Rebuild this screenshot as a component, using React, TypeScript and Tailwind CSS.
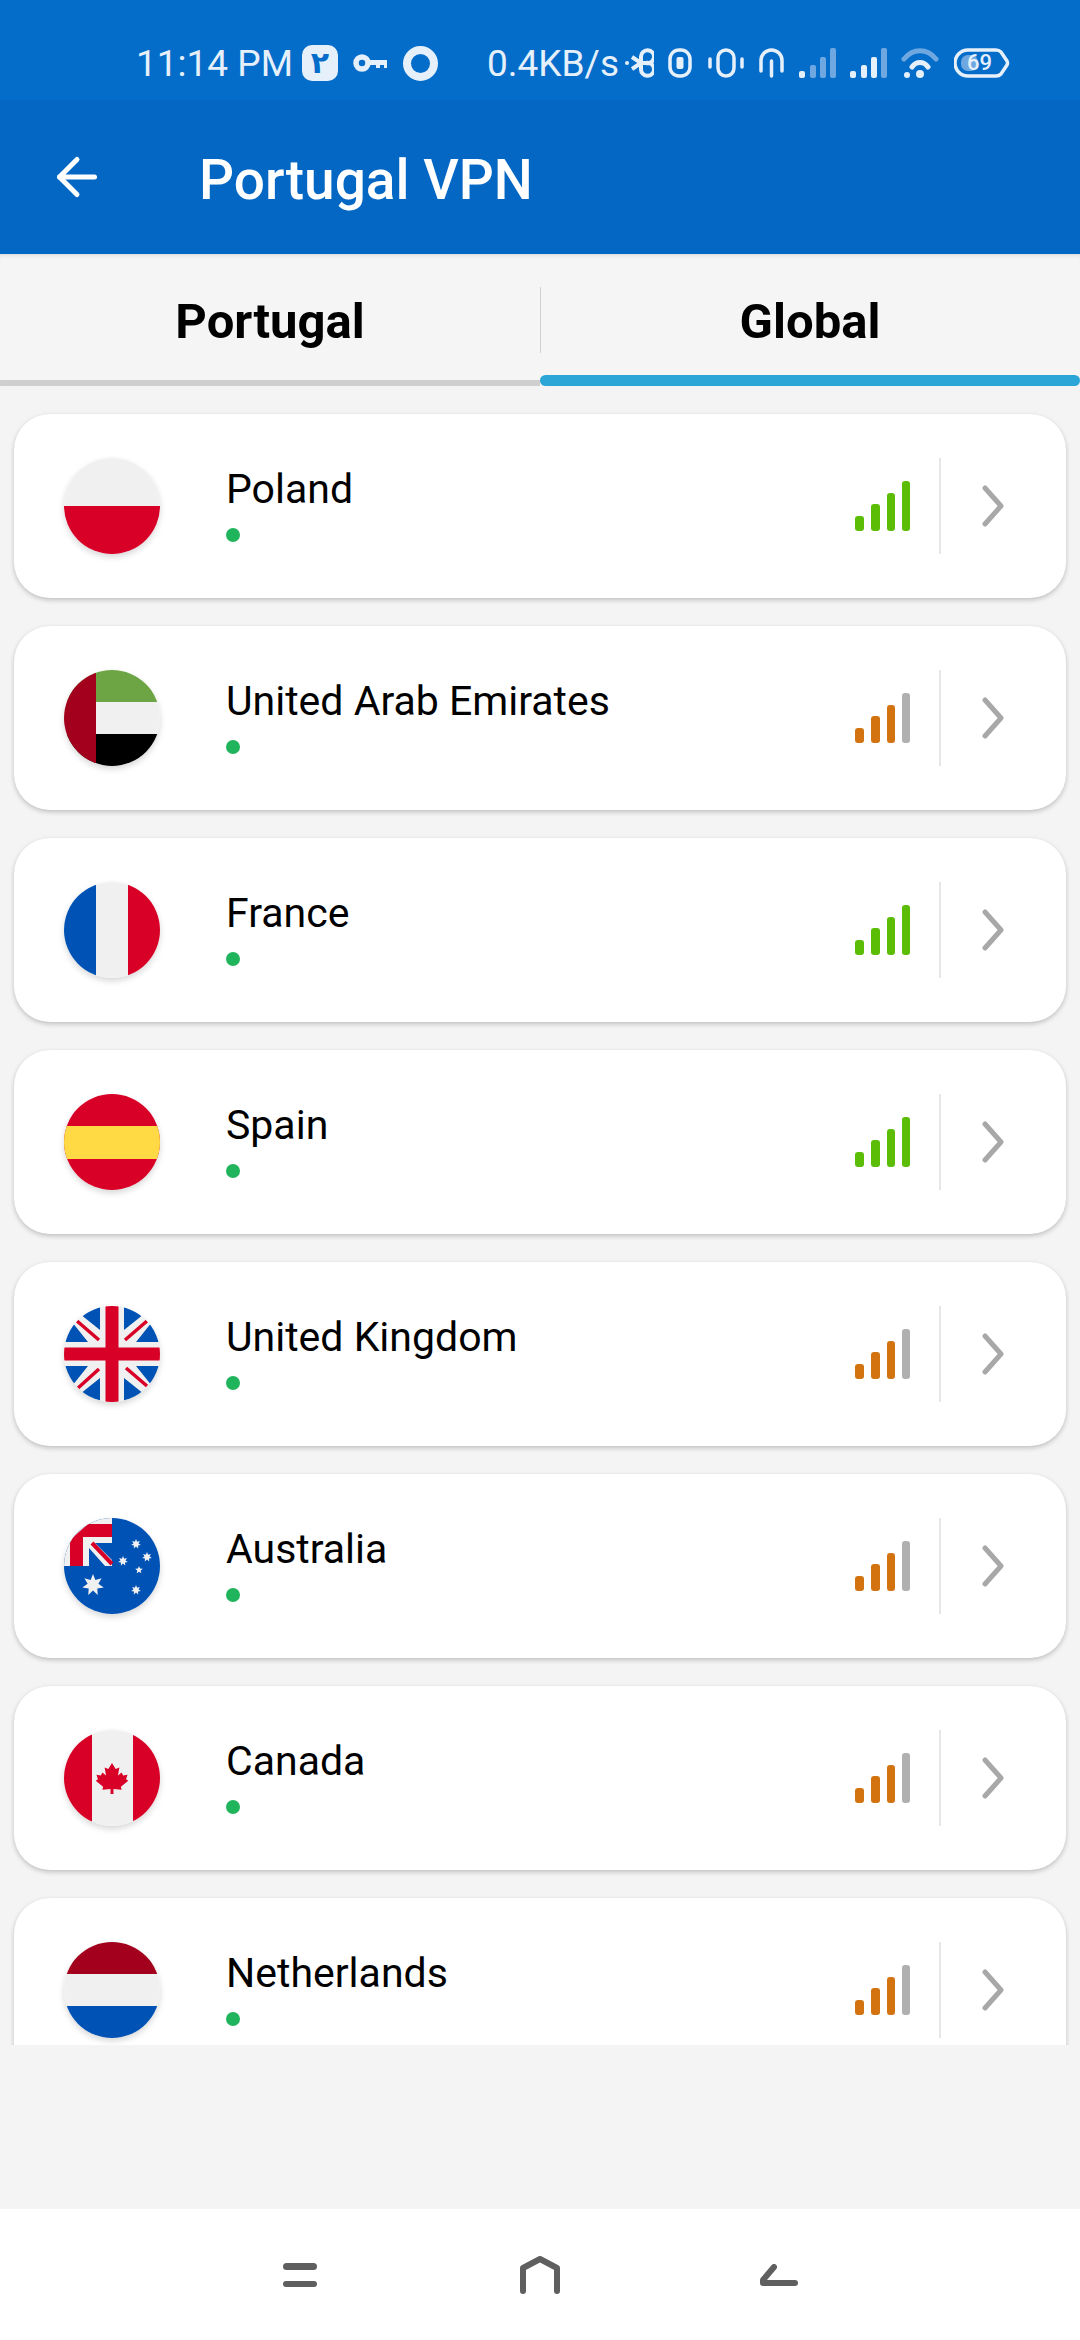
import { ArrowLeft } from 'lucide-react';

type Country = {
  name: string;
  flag: string;
  strong?: boolean;
};

const countries: Country[] = [
  { name: 'Poland', flag: 'pl', strong: true },
  { name: 'United Arab Emirates', flag: 'ae' },
  { name: 'France', flag: 'fr', strong: true },
  { name: 'Spain', flag: 'es', strong: true },
  { name: 'United Kingdom', flag: 'gb' },
  { name: 'Australia', flag: 'au' },
  { name: 'Canada', flag: 'ca' },
  { name: 'Netherlands', flag: 'nl' },
];

// 澳大利亚国旗上的星星
function starPoints(cx: number, cy: number, outer: number, inner: number, tips: number) {
  const pts: string[] = [];
  for (let i = 0; i < tips * 2; i++) {
    const r = i % 2 === 0 ? outer : inner;
    const a = (Math.PI * i) / tips - Math.PI / 2;
    pts.push(`${(cx + r * Math.cos(a)).toFixed(2)},${(cy + r * Math.sin(a)).toFixed(2)}`);
  }
  return pts.join(' ');
}

// 国旗都画在 96x96 的方框里，外面用圆形裁剪
function FlagArt({ flag }: { flag: string }) {
  switch (flag) {
    case 'pl':
      return (
        <>
          <rect width="96" height="48" fill="#f0f0f0" />
          <rect y="48" width="96" height="48" fill="#d80027" />
        </>
      );
    case 'ae':
      return (
        <>
          <rect width="96" height="32" fill="#6da544" />
          <rect y="32" width="96" height="32" fill="#f0f0f0" />
          <rect y="64" width="96" height="32" fill="#000000" />
          <rect width="32" height="96" fill="#a2001d" />
        </>
      );
    case 'fr':
      return (
        <>
          <rect width="32" height="96" fill="#0052b4" />
          <rect x="32" width="32" height="96" fill="#f0f0f0" />
          <rect x="64" width="32" height="96" fill="#d80027" />
        </>
      );
    case 'es':
      return (
        <>
          <rect width="96" height="96" fill="#d80027" />
          <rect y="32" width="96" height="33" fill="#ffda44" />
        </>
      );
    case 'gb':
      return (
        <>
          <rect width="96" height="96" fill="#f0f0f0" />
          <path
            d="M36 0V24L16 8ZM0 36H24L8 16ZM60 0V24L80 8ZM96 36H72L88 16ZM36 96V72L16 88ZM0 60H24L8 80ZM60 96V72L80 88ZM96 60H72L88 80Z"
            fill="#0052b4"
          />
          <path d="M13 15 35 34M83 15 61 34M14 82 35 63M83 80 62 62" stroke="#d80027" strokeWidth="3.5" />
          <rect x="41.5" width="13" height="96" fill="#d80027" />
          <rect y="41.5" width="96" height="13" fill="#d80027" />
        </>
      );
    case 'au':
      return (
        <>
          <rect width="96" height="96" fill="#0052b4" />
          <rect width="48" height="48" fill="#f0f0f0" />
          <path d="M6 48V22L24 6H48V19H19V48Z" fill="#d80027" />
          <path d="M25 30V48H41ZM31 25H48V42Z" fill="#0052b4" />
          <path d="M28 25 48 46" stroke="#d80027" strokeWidth="4" />
          <g fill="#f0f0f0">
            <polygon points={starPoints(29, 67, 11, 5.5, 7)} />
            <polygon points={starPoints(72, 26, 5, 2.6, 7)} />
            <polygon points={starPoints(59, 43, 5, 2.6, 7)} />
            <polygon points={starPoints(83, 39, 5, 2.6, 7)} />
            <polygon points={starPoints(75, 52, 4, 1.8, 5)} />
            <polygon points={starPoints(72, 72, 5, 2.6, 7)} />
          </g>
        </>
      );
    case 'ca':
      return (
        <>
          <rect width="96" height="96" fill="#f0f0f0" />
          <rect width="28" height="96" fill="#d80027" />
          <rect x="69" width="27" height="96" fill="#d80027" />
          <path
            transform="translate(48 33) scale(.74) translate(-48 -32)"
            d="M48 32 53 40 58 38 56 49 61 45 63 49 69 48 67 54 70 56 60 64 61 68 50 67V74H46V67L35 68 36 64 26 56 29 54 27 48 33 49 35 45 40 49 38 38 43 40Z"
            fill="#d80027"
          />
        </>
      );
    default:
      return (
        <>
          <rect width="96" height="32" fill="#a2001d" />
          <rect y="32" width="96" height="32" fill="#f0f0f0" />
          <rect y="64" width="96" height="32" fill="#0052b4" />
        </>
      );
  }
}

function Flag({ flag }: { flag: string }) {
  return (
    <div className="h-[96px] w-[96px] shrink-0 overflow-hidden rounded-full shadow-[0_3px_6px_rgba(0,0,0,0.16)]">
      <svg viewBox="0 0 96 96" className="block h-full w-full">
        <FlagArt flag={flag} />
      </svg>
    </div>
  );
}

function SignalBars({ strong }: { strong?: boolean }) {
  const on = strong ? 'bg-[#5cbd06]' : 'bg-[#d2730f]';
  return (
    <div className="flex items-end gap-[7px]">
      <div className={`h-[15px] w-[9px] rounded-[3px] ${on}`} />
      <div className={`h-[27px] w-[9px] rounded-[3px] ${on}`} />
      <div className={`h-[38px] w-[8px] rounded-[3px] ${on}`} />
      <div className={`h-[50px] w-[8px] rounded-[3px] ${strong ? on : 'bg-[#b0b0b0]'}`} />
    </div>
  );
}

function CountryCard({ country }: { country: Country }) {
  return (
    <div className="flex h-[184px] shrink-0 items-center rounded-[36px] bg-white pl-[50px] pr-[62px] shadow-[0_2px_5px_rgba(0,0,0,0.22)]">
      <Flag flag={country.flag} />
      <div className="ml-[66px] flex flex-1 flex-col pb-[4px]">
        <div className="text-[41px] leading-[47px] text-black">{country.name}</div>
        <div className="mt-[15px] h-[14px] w-[14px] rounded-full bg-[#20b45c]" />
      </div>
      <SignalBars strong={country.strong} />
      <div className="ml-[29px] h-[96px] w-[2px] bg-[#e6e6e6]" />
      <svg viewBox="0 0 22 42" className="ml-[41px] h-[42px] w-[22px]" fill="none" stroke="#a8a8a8" strokeWidth="5" strokeLinecap="round" strokeLinejoin="round">
        <path d="M3 3 19 21 3 39" />
      </svg>
    </div>
  );
}

function StatusIcons() {
  return (
    <>
      <svg width="29" height="30" viewBox="0 0 29 30" fill="none" stroke="#e6f0fa" strokeWidth="4" className="ml-[9px]">
        <path d="M7 9 16 15 21 15A6.5 6.5 0 1 0 16 9V21A6.5 6.5 0 1 0 21 15M16 15 7 21" />
        <circle cx="2" cy="15" r="2" fill="#e6f0fa" stroke="none" />
      </svg>
      <svg width="24" height="30" viewBox="0 0 24 30" fill="none" stroke="#e6f0fa" strokeWidth="3.5" className="ml-[14px]">
        <rect x="2" y="2" width="20" height="26" rx="9" />
        <rect x="8.5" y="9" width="7" height="12" rx="2" fill="#e6f0fa" stroke="none" />
      </svg>
      <svg width="36" height="30" viewBox="0 0 36 30" fill="none" stroke="#e6f0fa" strokeWidth="3.5" strokeLinecap="round" className="ml-[16px]">
        <rect x="10" y="2" width="16" height="26" rx="8" />
        <path d="M2 11V19M34 11V19" />
      </svg>
      <svg width="25" height="30" viewBox="0 0 25 30" fill="none" stroke="#e6f0fa" strokeWidth="3.5" strokeLinecap="round" className="ml-[15px]">
        <path d="M2 23V12.5a10.5 10.5 0 0 1 21 0V23M12.5 13V28" />
      </svg>
      <svg width="37" height="30" viewBox="0 0 37 30" className="ml-[15px]">
        <rect x="0" y="23" width="6" height="7" rx="2" fill="#e6f0fa" />
        <rect x="11" y="17" width="6" height="13" rx="2" fill="#6fa8e0" />
        <rect x="21" y="9" width="6" height="21" rx="2" fill="#6fa8e0" />
        <rect x="31" y="0" width="6" height="30" rx="2" fill="#6fa8e0" />
      </svg>
      <svg width="37" height="30" viewBox="0 0 37 30" className="ml-[14px]">
        <rect x="0" y="23" width="6" height="7" rx="2" fill="#e6f0fa" />
        <rect x="11" y="17" width="6" height="13" rx="2" fill="#e6f0fa" />
        <rect x="21" y="9" width="6" height="21" rx="2" fill="#e6f0fa" />
        <rect x="31" y="0" width="6" height="30" rx="2" fill="#6fa8e0" />
      </svg>
      <svg width="38" height="30" viewBox="0 0 38 30" fill="none" className="ml-[14px]">
        <path d="M3 11C12 0 26 0 35 11" stroke="#6fa8e0" strokeWidth="5" strokeLinecap="round" />
        <path d="M11 19C15 13 23 13 27 19" stroke="#e6f0fa" strokeWidth="5" strokeLinecap="round" />
        <circle cx="6" cy="27" r="3" fill="#e6f0fa" />
        <circle cx="19" cy="26" r="4" fill="#e6f0fa" />
      </svg>
      <div className="relative ml-[15px] h-[30px] w-[56px]">
        <svg width="56" height="30" viewBox="0 0 56 30" fill="none" className="absolute inset-0">
          <rect x="7" y="7" width="17" height="16" rx="7" fill="#6fa8e0" />
          <path d="M14 2H42Q45 2 47 4L53 13Q54 15 53 17L47 26Q45 28 42 28H14A13 13 0 0 1 14 2Z" stroke="#e6f0fa" strokeWidth="3.5" />
        </svg>
        <span className="absolute left-[13px] top-0 text-[22px] font-medium leading-[30px] text-[#e6f0fa]">69</span>
      </div>
    </>
  );
}

function StatusBar() {
  return (
    <div className="flex h-[100px] items-center whitespace-nowrap bg-[#046dca] pl-[136px] pt-[26px] font-['Roboto',sans-serif] text-[37px] leading-none text-[#e6f0fa]">
      <span className="w-[157px]">11:14 PM</span>
      <div className="ml-[9px] flex h-[36px] w-[36px] items-center justify-center rounded-[10px] bg-[#e6f0fa] font-['DejaVu_Sans',sans-serif] text-[30px] font-bold text-[#046dca]">
        ٢
      </div>
      <svg width="34" height="18" viewBox="0 0 34 18" fill="none" className="ml-[15px]">
        <circle cx="9" cy="9" r="6" stroke="#e6f0fa" strokeWidth="5.5" />
        <path d="M14 6H34V14H31V11H27V14H23V11H14Z" fill="#e6f0fa" />
      </svg>
      <div className="ml-[16px] h-[35px] w-[35px] rounded-full border-[8px] border-[#e6f0fa]" />
      <span className="ml-[49px] w-[129px]">0.4KB/s</span>
      <StatusIcons />
    </div>
  );
}

function NavBar() {
  return (
    <div className="flex h-[131px] shrink-0 items-center justify-center gap-[200px] bg-white">
      <svg width="34" height="24" viewBox="0 0 34 24" fill="#5f5f5f" className="mr-[3px]">
        <rect width="34" height="7" rx="3.5" />
        <rect y="18" width="34" height="6" rx="3" />
      </svg>
      <svg width="40" height="38" viewBox="0 0 40 38" fill="none" stroke="#5f5f5f" strokeWidth="6" strokeLinecap="round" strokeLinejoin="round">
        <path d="M3 35V12L20 3 37 12V35" />
      </svg>
      <svg width="38" height="22" viewBox="0 0 38 22" fill="none" stroke="#5f5f5f" strokeWidth="6" strokeLinecap="round" strokeLinejoin="round">
        <path d="M14 3 3 16V19H35" />
      </svg>
    </div>
  );
}

export default function App() {
  return (
    <div className="flex h-[2340px] w-[1080px] flex-col overflow-hidden bg-[#f4f4f4] font-['Roboto',sans-serif]">
      <StatusBar />

      <div className="flex h-[154px] shrink-0 items-center bg-[#0467c4]">
        <ArrowLeft className="ml-[47px] h-[60px] w-[60px] text-white" strokeWidth={2} />
        <h1 className="ml-[92px] mt-[6px] text-[55px] font-medium leading-none text-white">Portugal VPN</h1>
      </div>

      {/* 标签栏 */}
      <div className="relative flex h-[132px] shrink-0 bg-[#f5f5f5] shadow-[inset_0_4px_4px_-3px_rgba(0,0,0,0.12)]">
        <div className="flex w-[540px] items-center justify-center border-b-[6px] border-[#cfcfcf] pt-[10px] text-[49px] font-bold text-black">
          Portugal
        </div>
        <div className="flex flex-1 items-center justify-center pt-[4px] text-[49px] font-bold text-black">Global</div>
        <div className="absolute bottom-0 right-0 h-[11px] w-[540px] rounded-full bg-[#2ba6d6]" />
        <div className="absolute left-[540px] top-[33px] h-[66px] w-px bg-[#d0d0d0]" />
      </div>

      <div className="flex h-[1659px] shrink-0 flex-col gap-[28px] overflow-hidden px-[14px] pt-[28px]">
        {countries.map((c) => (
          <CountryCard key={c.name} country={c} />
        ))}
      </div>

      <div className="flex-1" />
      <NavBar />
    </div>
  );
}
